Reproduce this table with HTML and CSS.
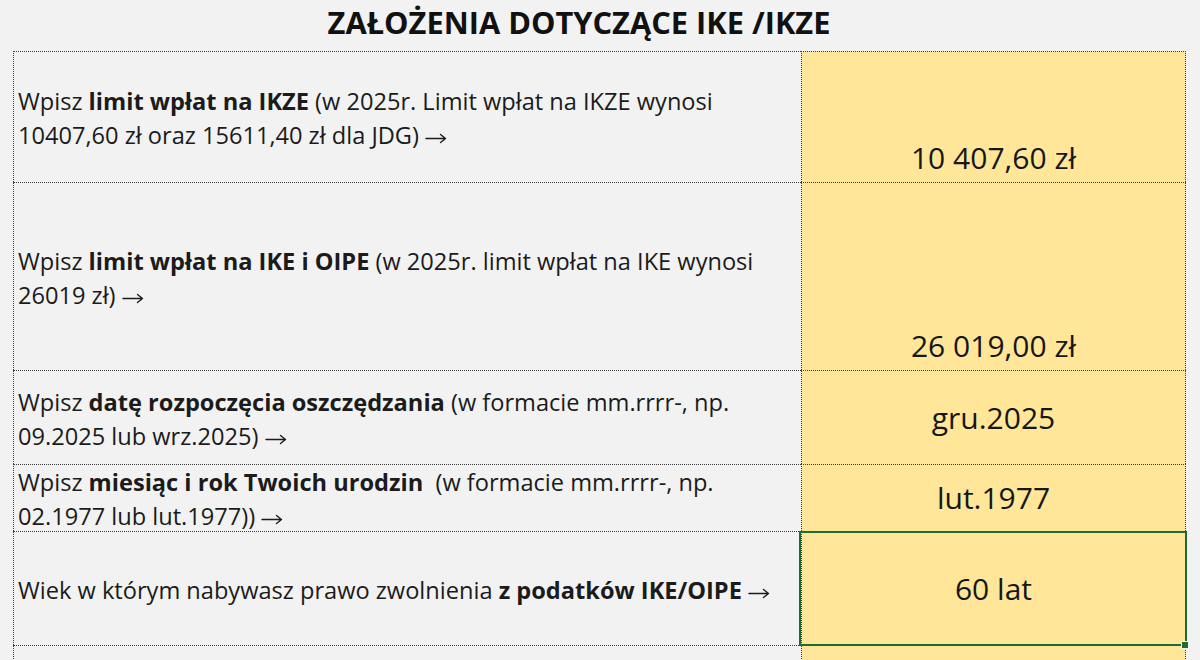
FILE: index.html
```html
<!DOCTYPE html>
<html lang="pl">
<head>
<meta charset="utf-8">
<title>Założenia dotyczące IKE / IKZE</title>
<link rel="stylesheet" href="styles.css">
</head>
<body>
<h1 class="title">ZAŁOŻENIA DOTYCZĄCE IKE /IKZE</h1>
<div class="sheet">
  <div class="cell label r1"><p class="txt">Wpisz <b>limit wpłat na IKZE</b> (w 2025r. Limit wpłat na IKZE wynosi 10407,60 zł oraz 15611,40 zł dla JDG) <svg class="arr" viewBox="0 0 22 12" aria-label="→"><path d="M1 6.5H20.5M15.5 2.5L20.5 6.5L15.5 10.5"/></svg></p></div>
  <div class="cell value bottom r1">10 407,60 zł</div>

  <div class="cell label r2"><p class="txt">Wpisz <b>limit wpłat na IKE i OIPE</b> (w 2025r. limit wpłat na IKE wynosi 26019 zł) <svg class="arr" viewBox="0 0 22 12" aria-label="→"><path d="M1 6.5H20.5M15.5 2.5L20.5 6.5L15.5 10.5"/></svg></p></div>
  <div class="cell value bottom r2">26 019,00 zł</div>

  <div class="cell label r3"><p class="txt">Wpisz <b>datę rozpoczęcia oszczędzania</b> (w formacie mm.rrrr-, np. 09.2025 lub wrz.2025) <svg class="arr" viewBox="0 0 22 12" aria-label="→"><path d="M1 6.5H20.5M15.5 2.5L20.5 6.5L15.5 10.5"/></svg></p></div>
  <div class="cell value r3">gru.2025</div>

  <div class="cell label r4"><p class="txt">Wpisz <b>miesiąc i rok Twoich urodzin</b>&nbsp; (w formacie mm.rrrr-, np. 02.1977 lub lut.1977)) <svg class="arr" viewBox="0 0 22 12" aria-label="→"><path d="M1 6.5H20.5M15.5 2.5L20.5 6.5L15.5 10.5"/></svg></p></div>
  <div class="cell value r4">lut.1977</div>

  <div class="cell label r5"><p class="txt">Wiek w którym nabywasz prawo zwolnienia <b>z podatków IKE/OIPE</b> <svg class="arr" viewBox="0 0 22 12" aria-label="→"><path d="M1 6.5H20.5M15.5 2.5L20.5 6.5L15.5 10.5"/></svg></p></div>
  <div class="cell value selected r5">60 lat<span class="handle"></span></div>

  <div class="cell label r6"></div>
  <div class="cell value r6"></div>
</div>
</body>
</html>
```

FILE: styles.css
```css
html, body {
  margin: 0;
  padding: 0;
  background: #f2f2f2;
  overflow: hidden;
}

body {
  width: 1200px;
  height: 660px;
  font-family: "Open Sans", "Noto Sans", sans-serif;
  color: #1b1b1b;
}

.title {
  margin: 0;
  height: 51px;
  box-sizing: border-box;
  padding-top: 1px;
  padding-right: 42px;
  text-align: center;
  font-size: 30.8px;
  font-weight: 700;
  line-height: 42px;
  color: #111;
}

.sheet {
  margin-left: 13px;
  display: grid;
  grid-template-columns: 788px 385px;
  grid-template-rows: 131px 188px 94px 67px 114px 40px;
}

.cell {
  box-sizing: border-box;
  border-top: 1px dotted #3a3a3a;
  border-left: 1px dotted #3a3a3a;
  display: flex;
  align-items: center;
}

.label {
  padding-left: 4px;
  padding-right: 8px;
  padding-top: 2px;
}

.txt {
  margin: 0;
  font-size: 23.6px;
  line-height: 34px;
}

.txt b {
  font-weight: 700;
}

.arr {
  display: inline-block;
  width: 22px;
  height: 12px;
  vertical-align: 0px;
  fill: none;
  stroke: #1b1b1b;
  stroke-width: 1.4;
  stroke-linecap: round;
  stroke-linejoin: round;
}

.value {
  background: #ffe699;
  border-right: 1px dotted #3a3a3a;
  justify-content: center;
  font-size: 30px;
  line-height: 38px;
  color: #161616;
}

.value.bottom {
  align-items: flex-end;
  padding-bottom: 5px;
}

.selected {
  position: relative;
}

.selected::after {
  content: "";
  position: absolute;
  left: -3px;
  top: -1px;
  right: -2px;
  bottom: -1px;
  border: 2px solid #1e6b36;
  pointer-events: none;
}

.handle {
  position: absolute;
  right: -4px;
  bottom: -4px;
  width: 6px;
  height: 6px;
  background: #1e6b36;
  border: 1px solid #f2f2f2;
  z-index: 2;
}
```
